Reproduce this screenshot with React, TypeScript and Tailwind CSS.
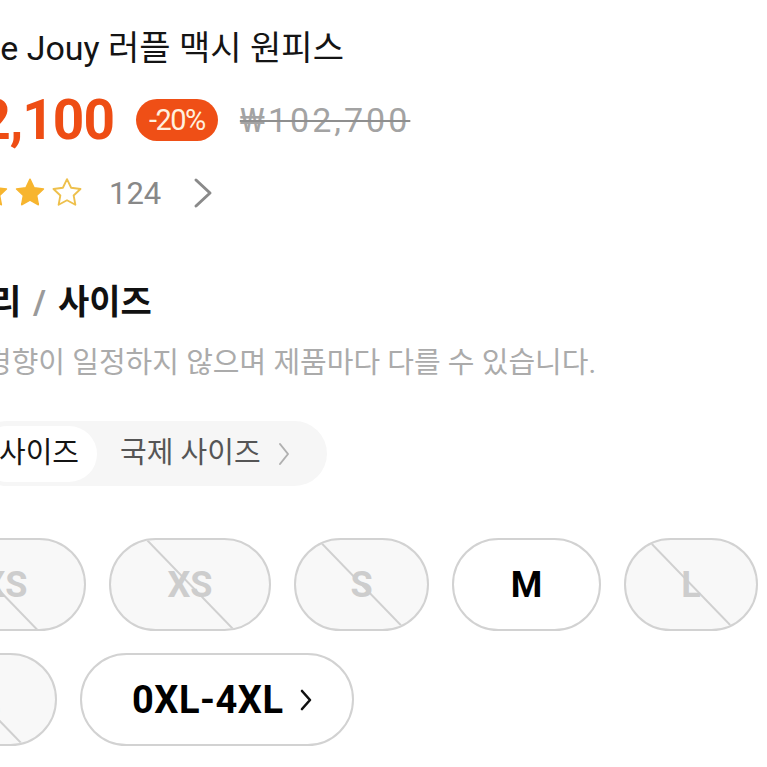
import React from "react";

const Star = ({ filled }: { filled: boolean }) => (
  <svg width="30" height="30" viewBox="1.6 1.8 20.8 20.8" className="shrink-0">
    <path
      d="M12 2.6l2.85 5.95 6.5.85-4.75 4.5 1.2 6.45L12 17.2l-5.8 3.15 1.2-6.45-4.75-4.5 6.5-.85z"
      fill={filled ? "#f7b52f" : "#ffffff"}
      stroke={filled ? "#f7b52f" : "#eec04c"}
      strokeWidth={filled ? 1 : 1.3}
      strokeLinejoin="round"
    />
  </svg>
);

type Size = { label: string; w: number; disabled: boolean };

const sizes: Size[] = [
  { label: "XXS", w: 185, disabled: true },
  { label: "XS", w: 162, disabled: true },
  { label: "S", w: 135, disabled: true },
  { label: "M", w: 149, disabled: false },
  { label: "L", w: 134, disabled: true },
  { label: "XL", w: 156, disabled: true },
];

const SizePill = ({ s }: { s: Size }) => (
  <div
    className={
      "relative h-[93px] shrink-0 rounded-full border-2 border-[#d2d2d2] overflow-hidden flex items-center justify-center " +
      (s.disabled ? "bg-[#f8f8f8]" : "bg-white")
    }
    style={{ width: s.w }}
  >
    {s.disabled && (
      <svg
        className="absolute inset-0"
        width="100%"
        height="100%"
        viewBox={`0 0 ${s.w - 4} 89`}
        preserveAspectRatio="none"
      >
        <line
          x1={(s.w - 4) / 2 - 44}
          y1={-1}
          x2={(s.w - 4) / 2 + 44}
          y2={90}
          stroke="#d0d0d0"
          strokeWidth="2"
        />
      </svg>
    )}
    <span
      className={
        "relative font-['Roboto',sans-serif] font-bold text-[36px] leading-none " +
        (s.disabled ? "text-[#cdcdcd]" : "text-black")
      }
    >
      {s.label}
    </span>
  </div>
);

export default function App() {
  return (
    <div className="w-[767px] h-[767px] overflow-hidden bg-white font-['Roboto','Noto_Sans_CJK_KR',sans-serif]">
      <div className="flex flex-col pt-[28px]">
        {/* Title */}
        <div className="h-[40px] flex items-center whitespace-nowrap">
          <span className="ml-[-100px] text-[34px] leading-[40px] text-[#141414]">
            Toile de Jouy 러플 맥시 원피스
          </span>
        </div>

        {/* Price row */}
        <div className="mt-[28px] h-[48px] flex items-center whitespace-nowrap">
          <span className="ml-[-95px] text-[55px] font-bold leading-none tracking-[-1px] text-[#ee4d14]">
            ₩82,100
          </span>
          <span className="ml-[22px] h-[42px] px-[13px] rounded-full bg-[#ef4f16] text-[#fff0de] text-[29px] leading-[42px] tracking-[-1.5px]">
            -20%
          </span>
          <span className="ml-[22px] text-[34px] leading-none tracking-[3px] text-[#a3a3a3] line-through decoration-[2px] decoration-[#8f8f8f]">
            ₩102,700
          </span>
        </div>

        {/* Rating row */}
        <div className="mt-[29px] h-[40px] flex items-center whitespace-nowrap">
          <div className="ml-[-59px] flex items-center gap-[7px]">
            <Star filled />
            <Star filled />
            <Star filled />
            <Star filled={false} />
          </div>
          <span className="ml-[27px] text-[31px] leading-none text-[#888]">124</span>
          <svg width="20" height="32" viewBox="0 0 20 32" className="ml-[32px]">
            <polyline
              points="3,3 17,16 3,29"
              fill="none"
              stroke="#8a8a8a"
              strokeWidth="3"
              strokeLinecap="round"
              strokeLinejoin="round"
            />
          </svg>
        </div>

        {/* Heading */}
        <div className="mt-[69px] h-[40px] flex items-center whitespace-nowrap">
          <span className="ml-[-10px] text-[34px] font-bold leading-none text-[#111]">
            리<span className="mx-[12px] text-[#9a9a9a]">/</span>사이즈
          </span>
        </div>

        {/* Subtitle */}
        <div className="mt-[23px] h-[36px] flex items-center whitespace-nowrap">
          <span className="ml-[-15px] text-[29px] leading-none text-[#ababab]">
            경향이 일정하지 않으며 제품마다 다를 수 있습니다.
          </span>
        </div>

        {/* Tabs */}
        <div className="mt-[40px] flex">
          <div className="ml-[-25px] inline-flex items-center h-[65px] p-[4px] pr-[37px] rounded-full bg-[#f6f6f6] whitespace-nowrap">
            <div className="h-[56px] flex items-center pl-[20px] pr-[18px] rounded-full bg-white text-[29px] text-[#141414]">
              사이즈
            </div>
            <div className="flex items-center pl-[23px] text-[29px] text-[#555]">
              국제 사이즈
              <svg width="12" height="24" viewBox="0 0 12 24" className="ml-[17px]">
                <polyline
                  points="2,2 10,12 2,22"
                  fill="none"
                  stroke="#b0b0b0"
                  strokeWidth="2"
                  strokeLinecap="round"
                  strokeLinejoin="round"
                />
              </svg>
            </div>
          </div>
        </div>

        {/* Size pills */}
        <div className="mt-[52px] ml-[-99px] w-[880px] flex flex-wrap gap-x-[23px] gap-y-[22px]">
          {sizes.map((s) => (
            <SizePill key={s.label} s={s} />
          ))}
          <div className="h-[93px] w-[274px] shrink-0 rounded-full border-2 border-[#d2d2d2] bg-white flex items-center pl-[50px]">
            <span className="font-['Roboto',sans-serif] font-bold text-[38px] leading-none tracking-[0.5px] text-black">
              0XL-4XL
            </span>
            <svg width="14" height="24" viewBox="0 0 14 24" className="ml-[16px]">
              <polyline
                points="3,3 11,12 3,21"
                fill="none"
                stroke="#111"
                strokeWidth="2.6"
                strokeLinecap="round"
                strokeLinejoin="round"
              />
            </svg>
          </div>
        </div>
      </div>
    </div>
  );
}
